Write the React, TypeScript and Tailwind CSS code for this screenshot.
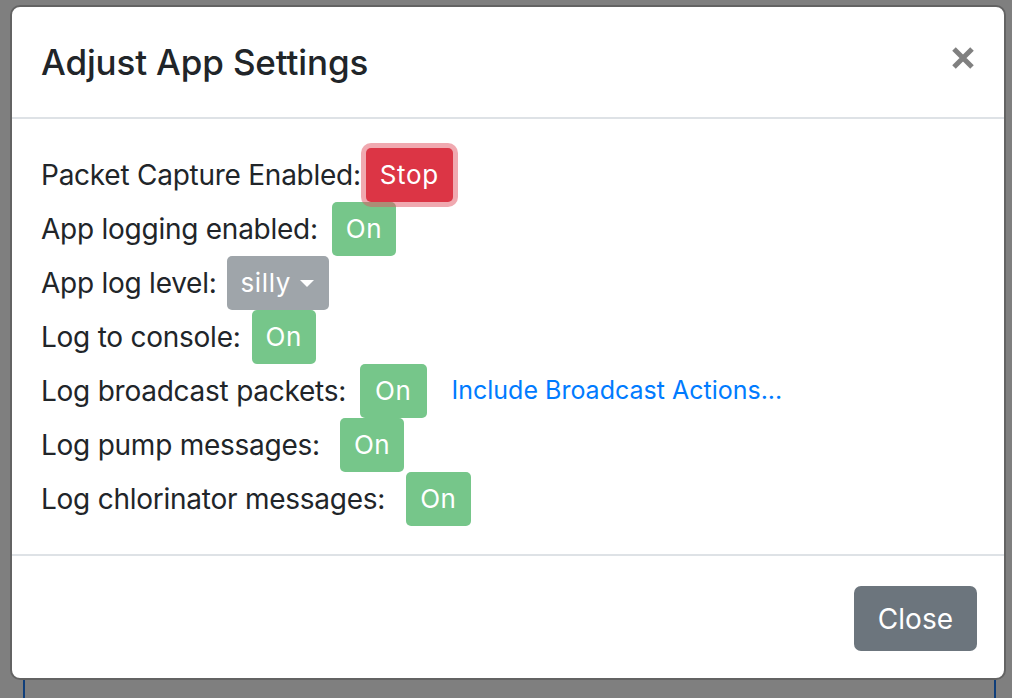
import React from "react";

const font = { fontFamily: "Inter, 'Noto Sans', sans-serif" };

function OnBtn({ ml }: { ml: string }) {
  return (
    <span
      className={`${ml} inline-flex items-center h-[54px] px-[14px] rounded-[5px] bg-[#76c68a] text-white text-[26px] tracking-[0.6px] leading-none`}
    >
      On
    </span>
  );
}

export default function App() {
  return (
    <div
      className="w-[1012px] h-[698px] bg-[#7f7f7f] overflow-hidden pt-[5px] pl-[10px]"
      style={font}
    >
      <div className="w-[996px] h-[675px] bg-white border-2 border-[#636363] rounded-[10px] flex flex-col">
        {/* header */}
        <div className="h-[112px] shrink-0 border-b-2 border-[#dee2e6] flex items-center justify-between pl-[29px] pr-[29px]">
          <div className="text-[35px] font-medium text-[#212529] leading-none tracking-[-0.15px]">Adjust App Settings</div>
          <svg width="24" height="24" viewBox="0 0 24 24" className="-mt-[8px]">
            <path d="M3 3 L21 21 M21 3 L3 21" stroke="#808080" strokeWidth="5" strokeLinecap="butt" />
          </svg>
        </div>
        {/* body */}
        <div className="pt-[29px] pb-[28px] pl-[29px] text-[28px] text-[#212529] tracking-[-0.25px]">
          <div className="h-[54px] flex items-center">
            <span>Packet Capture Enabled:</span>
            <span className="relative z-10 ml-[5px] inline-flex items-center h-[54px] px-[14px] rounded-[5px] bg-[#dc3545] text-white text-[26px] tracking-[0.6px] leading-none shadow-[0_0_0_5px_rgba(225,83,97,0.5)]">
              Stop
            </span>
          </div>
          <div className="h-[54px] flex items-center">
            <span>App logging enabled:</span>
            <OnBtn ml="ml-[14px]" />
          </div>
          <div className="h-[54px] flex items-center">
            <span>App log level:</span>
            <span className="ml-[10px] inline-flex items-center h-[54px] pl-[14px] pr-[15px] rounded-[5px] bg-[#9fa5aa] text-white text-[26px] tracking-[0.6px] leading-none">
              silly
              <span className="ml-[9px] w-0 h-0 border-t-[7px] border-t-white border-x-[7px] border-x-transparent" />
            </span>
          </div>
          <div className="h-[54px] flex items-center">
            <span>Log to console:</span>
            <OnBtn ml="ml-[11px]" />
          </div>
          <div className="h-[54px] flex items-center">
            <span>Log broadcast packets:</span>
            <span className="ml-[14px] inline-flex items-center h-[54px] px-[15px] rounded-[5px] bg-[#76c68a] text-white text-[26px] tracking-[0.6px] leading-none">
              On
            </span>
            <span className="ml-[25px] text-[25px] tracking-normal text-[#007bff]">Include Broadcast Actions...</span>
          </div>
          <div className="h-[54px] flex items-center">
            <span>Log pump messages:</span>
            <OnBtn ml="ml-[20px]" />
          </div>
          <div className="h-[54px] flex items-center">
            <span>Log chlorinator messages:</span>
            <OnBtn ml="ml-[21px]" />
          </div>
        </div>
        {/* footer */}
        <div className="border-t-2 border-[#dee2e6] pt-[30px] pr-[27px] flex justify-end">
          <span className="inline-flex items-center h-[65px] px-[24px] rounded-[7px] bg-[#6c757d] text-white text-[28px] leading-none">
            Close
          </span>
        </div>
      </div>
      <div className="ml-[13px] w-[973px] h-[20px] border-x-2 border-[#0f3e7a]" />
    </div>
  );
}
